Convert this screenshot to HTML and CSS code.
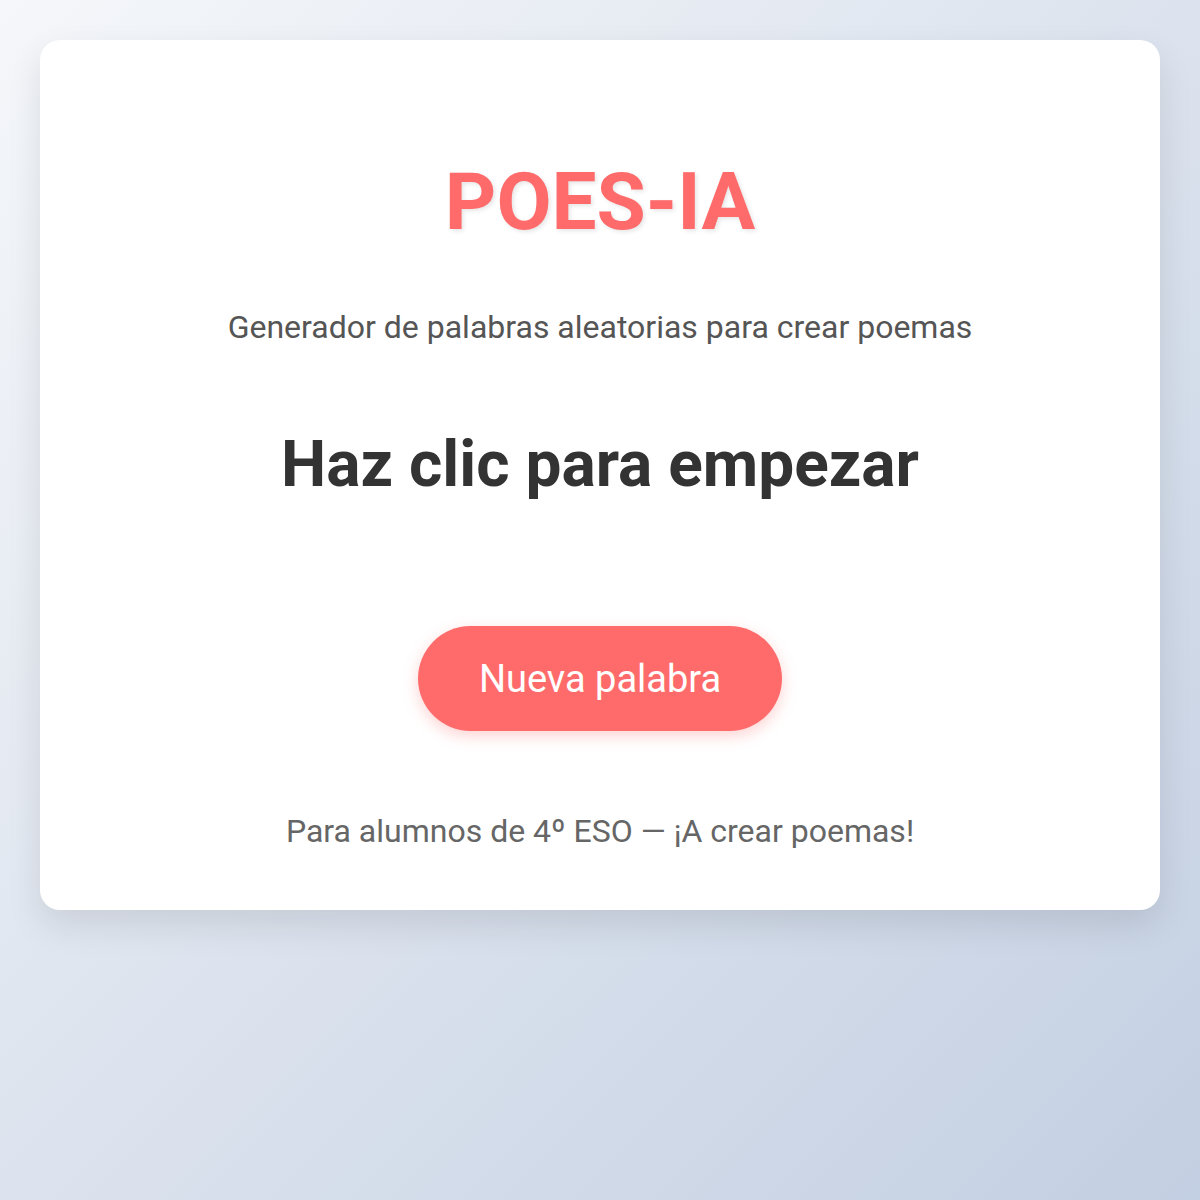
FILE: index.html
```html
<!DOCTYPE html>
<html lang="es">

<head>
    <meta charset="UTF-8">
    <meta name="viewport" content="width=device-width, initial-scale=1.0">
    <title>POES-IA</title>
    <link rel="stylesheet" href="styles.css">
</head>

<body>

    <div class="container">
        <h1 class="title">POES-IA</h1>
        <p class="subtitle">Generador de palabras aleatorias para crear poemas</p>

        <div class="wordBox">
            <p class="word">Haz clic para empezar</p>
        </div>

        <div class="actions">
            <button class="newWord">Nueva palabra</button>
        </div>

        <p class="footer">Para alumnos de 4º ESO — ¡A crear poemas!</p>
    </div>

</body>

</html>
```

FILE: styles.css
```css
html {
    font-family: Roboto, "Noto Sans", sans-serif;
}

body {
    margin: 0;
    padding: 40px;
    min-height: 100vh;
    box-sizing: border-box;
    background: linear-gradient(135deg, #f5f7fa 0%, #c3cfe2 100%);
}

.container {
    background-color: white;
    border-radius: 20px;
    box-shadow: 0 15px 35px rgba(0, 0, 0, 0.1);
    padding: 60px 40px;
    text-align: center;
}

.title {
    margin: 62px 0 0;
    font-size: 80px;
    line-height: 1;
    font-weight: 700;
    color: #ff6b6b;
    text-shadow: 2px 2px 4px rgba(0, 0, 0, 0.1);
}

.subtitle {
    margin: 69px 0 0;
    font-size: 32px;
    line-height: 1;
    color: #555;
}

.wordBox {
    margin-top: 90px;
}

.word {
    margin: 0;
    font-size: 64px;
    line-height: 1;
    font-weight: 700;
    color: #333;
}

.actions {
    margin-top: 129px;
    line-height: 0;
}

.newWord {
    font-family: inherit;
    font-size: 38px;
    line-height: 1;
    color: white;
    background-color: #ff6b6b;
    border: none;
    border-radius: 60px;
    padding: 34px 61px 33px;
    box-shadow: 0 5px 15px rgba(255, 107, 107, 0.3);
    cursor: pointer;
}

.newWord:hover {
    background-color: #ff5252;
}

.footer {
    margin: 84px 0 3px;
    font-size: 32px;
    line-height: 1;
    color: #666;
}
```
